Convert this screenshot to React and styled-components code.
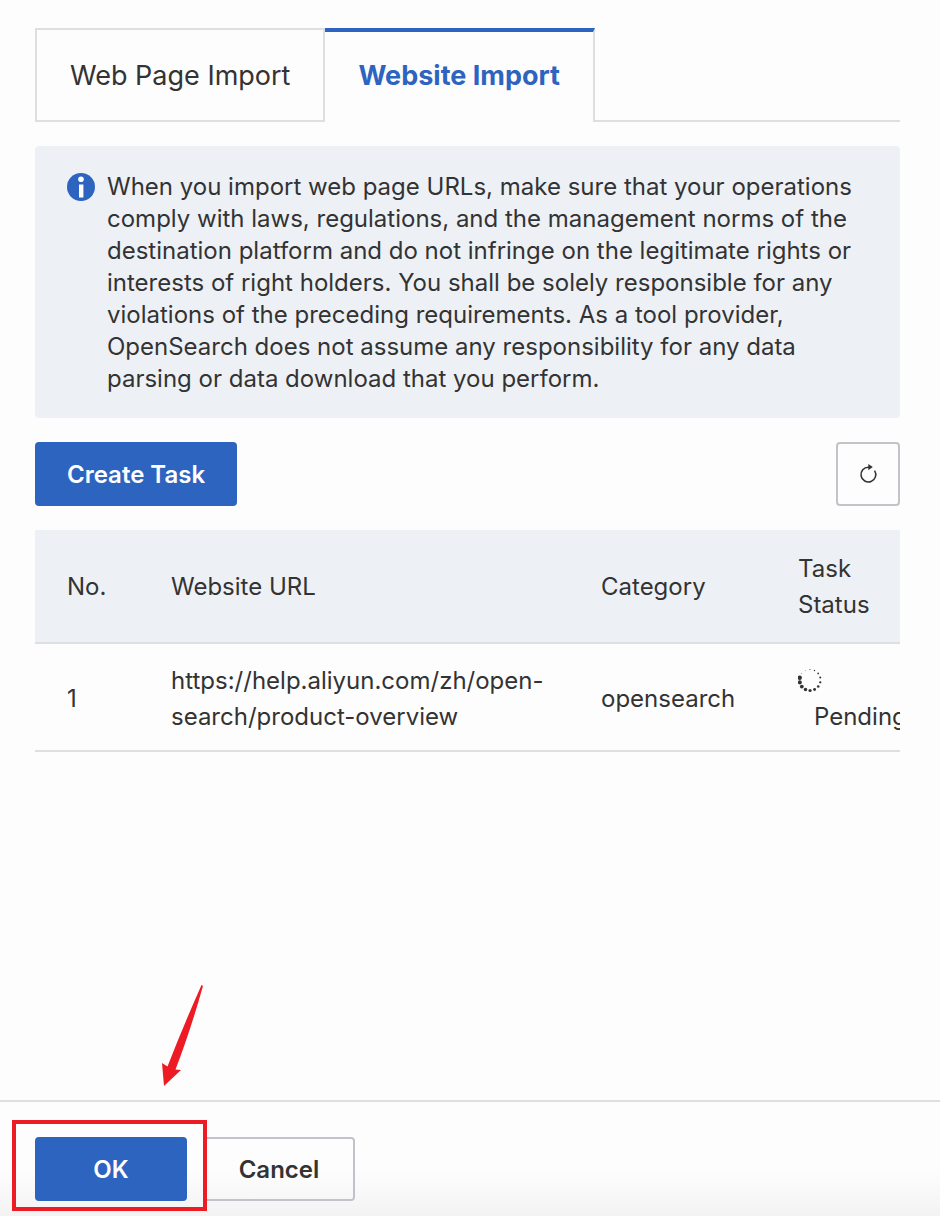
import React, { useState } from 'react';
import styled, { createGlobalStyle } from 'styled-components';

const tabs = ['Web Page Import', 'Website Import'];

const tasks = [
  {
    no: 1,
    url: 'https://help.aliyun.com/zh/open-search/product-overview',
    category: 'opensearch',
    status: 'Pending',
  },
];

const InfoIcon = () => (
  <svg width="28" height="28" viewBox="0 0 28 28" aria-hidden="true">
    <circle cx="14" cy="14" r="14" fill="#2d64c0" />
    <circle cx="14" cy="6.3" r="2.8" fill="#fff" />
    <rect x="12" y="11.5" width="4.4" height="13" fill="#fff" />
  </svg>
)

const RefreshIcon = () => (
  <svg width="20" height="20" viewBox="0 0 20 20" aria-hidden="true">
    <path d="M16.6 6.6A7.4 7.4 0 1 1 10.5 3.2h2" fill="none" stroke="#333" strokeWidth="1.6" />
    <path d="M10.3 0L14.8 3.1L10.3 6.3Z" fill="#333" />
  </svg>
)

const Spinner = () => {
  const count = 14;
  return (
    <svg width="26" height="26" viewBox="0 0 26 26" aria-hidden="true">
      {Array.from({ length: count }, (_, i) => {
        const angle = Math.PI * 1.07 - (i * 2 * Math.PI) / count;
        const radius = Math.max(0.4, 2.2 - i * 0.15);
        return (
          <circle
            key={i}
            cx={12 + 10.5 * Math.cos(angle)}
            cy={13 + 10.5 * Math.sin(angle)}
            r={radius}
            fill="#333"
          />
        );
      })}
    </svg>
  )
}

const App = () => {
  const [active, setActive] = useState(1);

  return (
    <Page>
      <GlobalStyle />
      <Content>
        <TabList role="tablist">
          {tabs.map((tab, index) => (
            <Tab
              key={tab}
              type="button"
              role="tab"
              aria-selected={active === index}
              $active={active === index}
              $first={index === 0}
              onClick={() => setActive(index)}
            >
              {tab}
            </Tab>
          ))}
          <TabFiller />
        </TabList>

        <Notice>
          <InfoIcon />
          <p>
            When you import web page URLs, make sure that your operations comply with laws,
            regulations, and the management norms of the destination platform and do not infringe
            on the legitimate rights or interests of right holders. You shall be solely responsible
            for any violations of the preceding requirements. As a tool provider, OpenSearch does
            not assume any responsibility for any data parsing or data download that you perform.
          </p>
        </Notice>

        <Toolbar>
          <Button type="button" $primary>Create Task</Button>
          <IconButton type="button" aria-label="Refresh">
            <RefreshIcon />
          </IconButton>
        </Toolbar>

        <TaskTable>
          <thead>
            <tr>
              <HeadCell scope="col" $width="104px">No.</HeadCell>
              <HeadCell scope="col">Website URL</HeadCell>
              <HeadCell scope="col" $width="197px">Category</HeadCell>
              <HeadCell scope="col" $width="134px">Task Status</HeadCell>
            </tr>
          </thead>
          <tbody>
            {tasks.map(({ no, url, category, status }) => (
              <tr key={no}>
                <Cell>{no}</Cell>
                <Cell>{url}</Cell>
                <Cell>{category}</Cell>
                <Cell>
                  <Status>
                    <Spinner />
                    <span>{status}</span>
                  </Status>
                </Cell>
              </tr>
            ))}
          </tbody>
        </TaskTable>
      </Content>

      <Footer>
        <Highlighted>
          <Button type="button" $primary $wide>OK</Button>
          <Frame />
          <Arrow width="48" height="106" viewBox="0 0 48 106" aria-hidden="true">
            <path
              d="M43.500 3L45 4Q32 50 17.500 87.500L23 88L6 104L4 81L9.500 84.500Q24 47 43.500 3Z"
              fill="#ed1c24"
            />
          </Arrow>
        </Highlighted>
        <Button type="button" $wide>Cancel</Button>
      </Footer>
    </Page>
  )
}

const GlobalStyle = createGlobalStyle`
  * {
    box-sizing: border-box;
  }

  body {
    margin: 0;
    background: #fdfdfd;
    color: #333;
    font-family: Inter, "Liberation Sans", sans-serif;
    font-size: 24px;
  }

  button {
    font-family: inherit;
    cursor: pointer;
  }
`

const Page = styled.div`
  display: flex;
  flex-direction: column;
  min-height: 100vh;
`

const Content = styled.main`
  display: flex;
  flex: 1;
  flex-direction: column;
  gap: 24px;
  padding: 28px 40px 24px 35px;
`

const TabList = styled.div`
  display: flex;
`

const Tab = styled.button`
  height: 94px;
  padding: 0 33px;
  border: 0 solid #dedfe0;
  border-right-width: 2px;
  border-left-width: ${({ $first }) => ($first ? '2px' : '0')};
  border-top: ${({ $active }) => ($active ? '4px solid #2d64c0' : '2px solid #dedfe0')};
  border-bottom: ${({ $active }) => ($active ? '0' : '2px solid #dedfe0')};
  padding-bottom: ${({ $active }) => ($active ? '4px' : '0')};
  background: transparent;
  color: ${({ $active }) => ($active ? '#2d64c0' : '#333')};
  font-size: 27px;
  font-weight: ${({ $active }) => ($active ? 700 : 400)};
`

const TabFiller = styled.div`
  flex: 1;
  border-bottom: 2px solid #dedfe0;
`

const Notice = styled.div`
  display: flex;
  gap: 12px;
  padding: 25px 32px 23px;
  border-radius: 4px;
  background: #edf1f6;
  line-height: 32px;

  svg {
    flex: none;
    margin-top: 2px;
  }

  p {
    margin: 0;
  }
`

const Toolbar = styled.div`
  display: flex;
  justify-content: space-between;
`

const Button = styled.button`
  height: 64px;
  min-width: ${({ $wide }) => ($wide ? '152px' : '0')};
  padding: 0 30px;
  border: 2px solid ${({ $primary }) => ($primary ? '#2d64c0' : '#c0c4c8')};
  border-radius: 4px;
  background: ${({ $primary }) => ($primary ? '#2d64c0' : 'transparent')};
  color: ${({ $primary }) => ($primary ? '#fff' : '#333')};
  font-size: 24px;
  font-weight: 600;
`

const IconButton = styled.button`
  display: flex;
  align-items: center;
  justify-content: center;
  width: 64px;
  height: 64px;
  padding: 0;
  border: 2px solid #c0c4c8;
  border-radius: 4px;
  background: transparent;
`

const TaskTable = styled.table`
  width: 100%;
  table-layout: fixed;
  border-collapse: separate;
  border-spacing: 0;
  line-height: 36px;
  text-align: left;
`

const HeadCell = styled.th`
  width: ${({ $width }) => $width || 'auto'};
  padding: 21px 0 19px 32px;
  border-bottom: 2px solid #dedfe0;
  background: #edf1f6;
  font-weight: 400;
`

const Cell = styled.td`
  overflow: hidden;
  padding: 18px 0 15px 32px;
  border-bottom: 2px solid #dedfe0;
`

const Status = styled.div`
  display: flex;
  flex-direction: column;

  svg {
    margin: 5px 0 6px;
  }

  span {
    padding-left: 16px;
  }
`

const Footer = styled.footer`
  display: flex;
  gap: 16px;
  padding: 35px 35px 15px;
  border-top: 2px solid #dedfe0;
  background: linear-gradient(#fdfdfd 60%, #f3f3f3);
`

const Highlighted = styled.div`
  position: relative;
`

const Frame = styled.div`
  position: absolute;
  inset: -17px -20px -10px -23px;
  border: 4px solid #ed1c24;
  pointer-events: none;
`

const Arrow = styled.svg`
  position: absolute;
  left: 123px;
  bottom: 113px;
  pointer-events: none;
`

export default App
